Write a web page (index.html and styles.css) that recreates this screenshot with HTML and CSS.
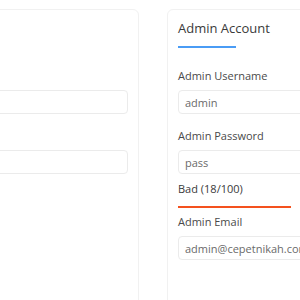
FILE: index.html
```html
<!DOCTYPE html>
<html lang="en">
<head>
  <meta charset="UTF-8" />
  <meta name="viewport" content="width=device-width, initial-scale=1.0" />
  <title>Settings</title>
  <link rel="stylesheet" href="styles.css">
</head>
<body>
  <div class="page">
    <div class="card card-site">
      <h2 aria-label="Site Settings"></h2>
      <div class="field">
        <label aria-label="Site Name"></label>
        <input type="text" value="" />
      </div>
      <div class="field">
        <label aria-label="Site URL"></label>
        <input type="text" value="" />
      </div>
    </div>

    <div class="card card-admin">
      <h2>Admin Account</h2>
      <div class="field">
        <label>Admin Username</label>
        <input type="text" value="admin" />
      </div>
      <div class="field">
        <label>Admin Password</label>
        <input type="text" value="pass" />
        <div class="strength">Bad (18/100)</div>
        <div class="strength-bar"></div>
      </div>
      <div class="field field-tight">
        <label>Admin Email</label>
        <input type="text" value="admin@cepetnikah.com" />
      </div>
    </div>
  </div>
</body>
</html>
```

FILE: styles.css
```css
* {
  box-sizing: border-box;
  margin: 0;
  padding: 0;
  font-family: 'Open Sans', sans-serif;
}

body {
  background: #ffffff;
  color: #3c3c3c;
  overflow: hidden;
}

.page {
  display: flex;
  gap: 28px;
  margin-left: -181px;
  padding-top: 9px;
}

.card {
  flex: none;
  width: 320px;
  min-height: 320px;
  background: #ffffff;
  border: 1px solid #f1f1f1;
  border-radius: 6px;
  padding: 8px 10px;
}

.card h2 {
  font-size: 13px;
  font-weight: 400;
  line-height: 20px;
  color: #3a3a3a;
  padding-bottom: 11px;
}

.card h2:empty::before {
  content: '';
  display: block;
  height: 20px;
}

.card h2::after {
  content: '';
  display: block;
  width: 58px;
  height: 2px;
  margin-top: 8px;
  background: #4a9cf5;
}

.field {
  margin-top: 9px;
}

.field + .field {
  margin-top: 14px;
}

.field + .field-tight {
  margin-top: 6px;
}

.field label {
  display: block;
  height: 16px;
  font-size: 11px;
  line-height: 16px;
  color: #4a4a4a;
  margin-bottom: 6px;
}

.field input {
  display: block;
  width: 100%;
  height: 24px;
  border: 1px solid #ebebeb;
  border-radius: 4px;
  padding: 0 6px;
  font-size: 11px;
  color: #6a6a6a;
  background: #ffffff;
  outline: none;
}

.strength {
  font-size: 11px;
  line-height: 16px;
  color: #3a3a3a;
  margin-top: 7px;
}

.strength-bar {
  width: 113px;
  height: 2px;
  margin-top: 9px;
  background: #f4511e;
}
```
